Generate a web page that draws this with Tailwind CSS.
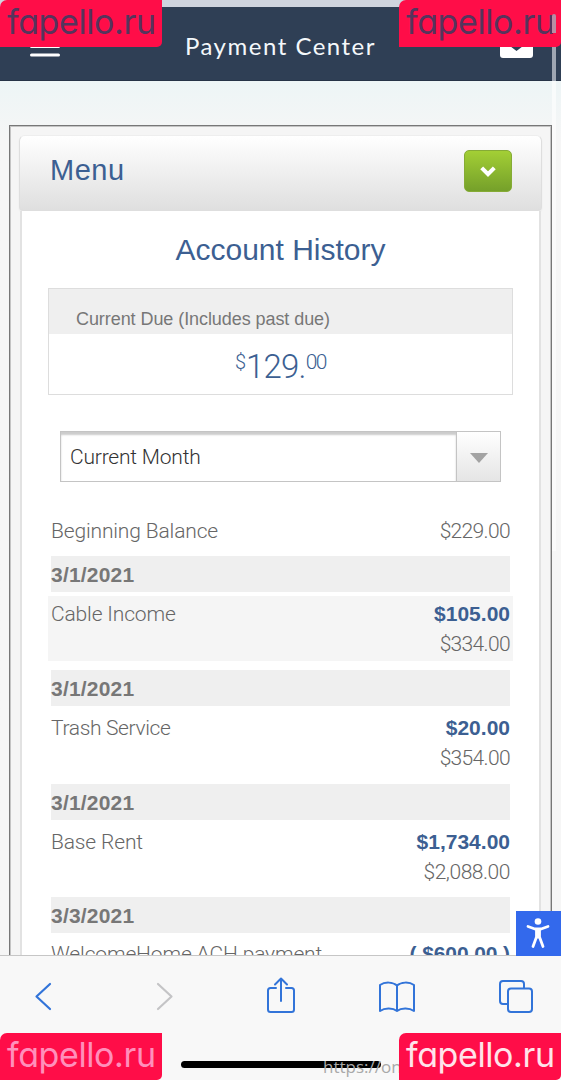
<!DOCTYPE html>
<html lang="en">
<head>
  <meta charset="UTF-8" />
  <meta name="viewport" content="width=device-width, initial-scale=1" />
  <title>Payment Center</title>
  <script src="https://cdn.jsdelivr.net/npm/@tailwindcss/browser@4"></script>
</head>
<body class="relative h-[1080px] w-[561px] overflow-hidden flex flex-col bg-[#f4f6f7] font-['Roboto',sans-serif] text-[#777]">
  <!-- Header -->
  <header class="h-[81px] shrink-0 border-t-[7px] border-t-[#cfd4de] border-b border-b-[#263347] bg-[#2f3f55] grid grid-cols-[1fr_auto_1fr] items-center px-[30px]">
    <svg class="w-[30px] h-[24px] mt-1" viewBox="0 0 30 24" fill="none" stroke="#fff" stroke-width="3" stroke-linecap="round"><path d="M1.500 4h27M1.500 12.500h27M1.500 21h27" /></svg>
    <h1 class="font-['Lato',sans-serif] text-[24px] leading-[30px] tracking-[1.500px] text-[#f4f8fb] mt-[5px]">Payment Center</h1>
    <svg class="justify-self-end w-[33px] h-[26px] mt-[3px] mr-[-2px]" viewBox="0 0 33 26" fill="#fff"><path d="M0 3a3 3 0 0 1 3-3h27a3 3 0 0 1 3 3v20a3 3 0 0 1-3 3H3a3 3 0 0 1-3-3z" /><path d="M2 6l14.500 11L31 6" fill="none" stroke="#2f3f55" stroke-width="3" /></svg>
  </header>

  <main class="flex-1 min-h-0 overflow-hidden pt-[44px] px-[9px] bg-linear-to-b from-[#edf5f6] to-[#f6f6f6] to-[60px]">
    <div class="h-[1000px] border border-[#777] bg-[#f5f5f5] pt-[9px] px-[9px] shadow-[inset_0_0_0_1px_#c4c4c4]">
      <div class="h-[76px] rounded-[6px] rounded-b-[4px] border border-[#dedede] border-t-[#eee] bg-linear-to-b from-white to-[#dfdfdf] shadow-xs flex items-center justify-between pl-[30px] pr-[29px]">
        <h2 class="font-['Liberation_Sans',sans-serif] text-[29px] leading-[34px] tracking-[0.500px] text-[#3c5f92] -mt-[6px]">Menu</h2>
        <button class="w-[48px] h-[42px] -mt-[4px] rounded-[5px] border border-[#86ab36] bg-linear-to-b from-[#a3cf35] to-[#75a02a] grid place-items-center">
          <svg class="w-[18px] h-[13px]" viewBox="0 0 20 14" fill="none" stroke="#fff" stroke-width="4.500"><path d="M3 3l7 7 7-7" /></svg>
        </button>
      </div>

      <div class="mx-[1px] h-[900px] border-x-2 border-[#e2e2e2] bg-white px-[26px] pt-[19px]">
        <h3 class="text-center font-['Liberation_Sans',sans-serif] text-[30px] leading-[39px] text-[#3c5f92]">Account History</h3>

        <div class="mt-[19px] h-[107px] border border-[#ddd]">
          <p class="h-[45px] bg-[#efefef] pl-[27px] pt-[18px] font-['Liberation_Sans',sans-serif] text-[18px] leading-[25px] tracking-[-0.070px]">Current Due (Includes past due)</p>
          <p class="flex justify-center items-start pt-[14px] font-light text-[#3c5f92]">
            <span class="text-[20px] leading-[28px]">$</span><span class="text-[33px] leading-[37px] tracking-[-0.800px]">129.</span><span class="text-[21px] leading-[28px] tracking-[-1.500px]">00</span>
          </p>
        </div>

        <div class="mt-[36px] mx-[12px] h-[51px] border border-[#c4c4c4] flex">
          <div class="flex-1 pl-[9px] text-[21px] leading-[51px] tracking-[-0.200px] font-light text-[#333] shadow-[inset_0_3px_2px_#ccc]">Current Month</div>
          <div class="w-[44px] border-l border-[#c4c4c4] bg-linear-to-b from-white to-[#e5e5e5] grid place-items-center">
            <svg class="w-[18px] h-[10px] mt-[2px]" viewBox="0 0 18 10" fill="#a3a3a3"><path d="M0 0h18l-9 10z" /></svg>
          </div>
        </div>

        <!-- Transactions -->
        <div class="mt-[34px] text-[21px] leading-[30px] tracking-[-0.150px] font-light text-[#666]">
          <div class="px-[3px] flex justify-between"><span>Beginning Balance</span><span class="tracking-[-0.650px]">$229.00</span></div>

          <div class="mt-[10px] mx-[3px] h-[36px] bg-[#efefef] font-['Liberation_Sans',sans-serif] font-bold tracking-[0.200px] leading-[37px] text-[#777]">3/1/2021</div>
          <div class="mt-[4px] h-[65px] px-[3px] bg-[#f5f5f5] pt-[3px] flex justify-between">
            <span>Cable Income</span>
            <p class="text-right tracking-[-0.650px]"><b class="block font-['Liberation_Sans',sans-serif] font-bold tracking-normal text-[#3c5f92]">$105.00</b>$334.00</p>
          </div>

          <div class="mt-[9px] mx-[3px] h-[36px] bg-[#efefef] font-['Liberation_Sans',sans-serif] font-bold tracking-[0.200px] leading-[37px] text-[#777]">3/1/2021</div>
          <div class="mt-[4px] h-[65px] px-[3px] pt-[3px] flex justify-between">
            <span class="tracking-[-0.350px]">Trash Service</span>
            <p class="text-right tracking-[-0.650px]"><b class="block font-['Liberation_Sans',sans-serif] font-bold tracking-normal text-[#3c5f92]">$20.00</b>$354.00</p>
          </div>

          <div class="mt-[9px] mx-[3px] h-[36px] bg-[#efefef] font-['Liberation_Sans',sans-serif] font-bold tracking-[0.200px] leading-[37px] text-[#777]">3/1/2021</div>
          <div class="mt-[4px] h-[65px] px-[3px] pt-[3px] flex justify-between">
            <span>Base Rent</span>
            <p class="text-right tracking-[-0.450px]"><b class="block font-['Liberation_Sans',sans-serif] font-bold tracking-normal text-[#3c5f92]">$1,734.00</b>$2,088.00</p>
          </div>

          <div class="mt-[8px] mx-[3px] h-[36px] bg-[#efefef] font-['Liberation_Sans',sans-serif] font-bold tracking-[0.200px] leading-[37px] text-[#777]">3/3/2021</div>
          <div class="mt-[4px] h-[65px] px-[3px] pt-[2px] flex justify-between">
            <span>WelcomeHome ACH payment</span>
            <b class="font-['Liberation_Sans',sans-serif] font-bold tracking-[-0.100px] text-[#3c5f92]">( $600.00 )</b>
          </div>
        </div>
      </div>
    </div>
  </main>

  <!-- Browser toolbar -->
  <nav class="h-[125px] shrink-0 border-t border-[#c6c6c6] bg-[#f8f8f8] flex justify-between items-start pt-[20px] pl-[34px] pr-[27px] text-[#3274d9]">
    <svg class="w-[18px] h-[40px]" viewBox="0 0 18 40" fill="none" stroke="currentColor" stroke-width="2.200" stroke-linecap="round" stroke-linejoin="round"><path d="M16 8L2.500 20.500 16 33" /></svg>
    <svg class="w-[18px] h-[40px] ml-[22px]" viewBox="0 0 18 40" fill="none" stroke="#c4c4c6" stroke-width="2.200" stroke-linecap="round" stroke-linejoin="round"><path d="M2 8l13.500 12.500L2 33" /></svg>
    <svg class="w-[30px] h-[40px] ml-[10px]" viewBox="0 0 30 40" fill="none" stroke="currentColor" stroke-width="2" stroke-linecap="round" stroke-linejoin="round"><path d="M10 12H4.500a2.500 2.500 0 0 0-2.500 2.500v19A2.500 2.500 0 0 0 4.500 36h21a2.500 2.500 0 0 0 2.500-2.500v-19a2.500 2.500 0 0 0-2.500-2.500H20M15 25V2.500M9 8.500L15 2.500l6 6" /></svg>
    <svg class="w-[38px] h-[40px]" viewBox="0 0 38 40" fill="none" stroke="currentColor" stroke-width="2" stroke-linejoin="round"><path d="M19 9.500C15 6 7 5.500 2 9V35c5-3.500 13-3 17 0 4-3 12-3.500 17 0V9C31 5.500 23 6 19 9.500zV35" /></svg>
    <svg class="w-[36px] h-[40px]" viewBox="0 0 36 40" fill="none" stroke="currentColor" stroke-width="2"><path d="M10 28H5a3 3 0 0 1-3-3V8a3 3 0 0 1 3-3h18a3 3 0 0 1 3 3v4.500" /><rect x="10" y="12.500" width="24" height="23.500" rx="3" /></svg>
  </nav>

  <!-- Accessibility shortcut -->
  <div class="absolute left-[516px] top-[911px] w-[45px] h-[45px] bg-[#3369ec]">
    <svg class="w-[45px] h-[45px]" viewBox="0 0 45 45" fill="none" stroke="#fff" stroke-width="2.800" stroke-linecap="round" stroke-linejoin="round"><circle cx="22" cy="10.500" r="3.300" fill="#fff" stroke="none" /><path d="M12 15.500l7 2.500h6l7-2.500M20.500 18v8L17 35.500M23.500 18v8L27 35.500M22 18v8" /></svg>
  </div>

  <!-- Home indicator and link preview -->
  <div class="absolute left-[181px] top-[1061px] w-[200px] h-[7px] rounded-full bg-black"></div>
  <div class="absolute left-[323px] top-[1057px] text-[17px] leading-[20px] font-['Open_Sans',sans-serif] text-[#a9a9a9] whitespace-nowrap">https://on</div>

  <!-- Corner badges -->
  <div class="absolute left-0 top-0 w-[162px] h-[47px] rounded-tl-[7px] rounded-br-[5px] bg-[#ff0d48] pl-[7px] font-['Inter',sans-serif] [font-feature-settings:'cv11'] text-[34px] leading-[43px] tracking-[-0.400px] text-[#56345d]">fapello.ru</div>
  <div class="absolute left-[399px] top-0 w-[162px] h-[47px] rounded-tl-[7px] rounded-br-[5px] bg-[#ff0d48] pl-[7px] font-['Inter',sans-serif] [font-feature-settings:'cv11'] text-[34px] leading-[43px] tracking-[-0.400px] text-[#56345d]">fapello.ru</div>
  <div class="absolute left-0 top-[1033px] w-[162px] h-[47px] rounded-tl-[7px] rounded-br-[5px] bg-[#ff0d48] pl-[7px] font-['Inter',sans-serif] [font-feature-settings:'cv11'] text-[34px] leading-[43px] tracking-[-0.400px] text-[#ff8fbb]">fapello.ru</div>
  <div class="absolute left-[399px] top-[1033px] w-[162px] h-[47px] rounded-tl-[7px] rounded-br-[5px] bg-[#ff0d48] pl-[7px] font-['Inter',sans-serif] [font-feature-settings:'cv11'] text-[34px] leading-[43px] tracking-[-0.400px] text-[#ffe3ea]">fapello.ru</div>

  <!-- Scrollbar -->
  <div class="absolute left-[552px] top-[14px] w-[4px] h-[19px] rounded-t-full bg-[#b78ea4]"></div>
  <div class="absolute left-[552px] top-[47px] w-[4px] h-[34px] bg-[#9ea6b2]"></div>
  <div class="absolute left-[552px] top-[81px] w-[4px] h-[470px] bg-white/60"></div>
</body>
</html>
